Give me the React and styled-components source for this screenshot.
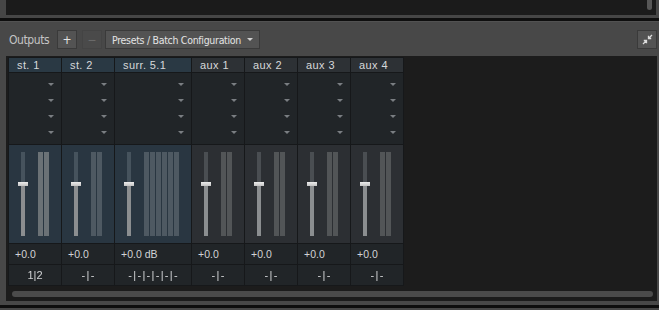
import React from 'react';
import styled, { createGlobalStyle } from 'styled-components';

const GlobalStyle = createGlobalStyle`
  html, body {
    margin: 0;
    padding: 0;
    background: #0e0e0e;
    font-family: "Liberation Sans", Arial, sans-serif;
    -webkit-font-smoothing: antialiased;
  }
`;

const Page = styled.div`
  width: 659px;
  height: 310px;
  overflow: hidden;
  display: flex;
  flex-direction: column;
`;

// top panel (cut off)
const TopFrame = styled.div`
  height: 18px;
  background: #464646;
  padding: 0 3px 3px 6px;
  box-sizing: border-box;
  flex: none;
`;

const TopInner = styled.div`
  height: 100%;
  background: #1b1b1b;
  display: flex;
  justify-content: flex-end;
  padding-right: 4px;
`;

const Thumb = styled.div`
  width: 5px;
  height: 10px;
  background: #575757;
  border-radius: 0 0 3px 3px;
`;

const MainPanel = styled.div`
  margin-top: 3px;
  height: 284px;
  flex: none;
  background: #484848;
  border-top: 1px solid #525252;
  box-sizing: border-box;
  display: flex;
  flex-direction: column;
  padding: 8px 2px 4px 6px;
`;

const Toolbar = styled.div`
  height: 19px;
  display: flex;
  align-items: center;
`;

const Title = styled.div`
  width: 51px;
  flex: none;
  padding-left: 3px;
  box-sizing: border-box;
  font-family: "DejaVu Sans Condensed", "Liberation Sans", sans-serif;
  font-size: 12px;
  letter-spacing: -0.4px;
  color: #c4c4c4;
`;

const ToolButton = styled.div`
  height: 19px;
  width: ${p => p.$w || 20}px;
  flex: none;
  box-sizing: border-box;
  border: 1px solid ${p => (p.$dim ? '#444' : '#3a3a3a')};
  background: ${p => (p.$dim ? '#4a4a4a' : '#535353')};
  color: ${p => (p.$dim ? '#6a6a6a' : '#e4e4e4')};
  display: flex;
  align-items: center;
  justify-content: center;
  margin-right: ${p => p.$mr || 0}px;
  font-family: "DejaVu Sans Condensed", "Liberation Sans", sans-serif;
  font-size: ${p => (p.$wide ? '10.5px' : '12px')};
  letter-spacing: ${p => (p.$wide ? '-0.3px' : '0')};
  white-space: nowrap;
  gap: 6px;
`;

const Spacer = styled.div`
  flex: 1;
`;

const Caret = styled.span`
  width: 0;
  height: 0;
  border-left: 3px solid transparent;
  border-right: 3px solid transparent;
  border-top: 3px solid ${p => p.$c || '#cfcfcf'};
`;

const Content = styled.div`
  margin-top: 7px;
  flex: 1;
  background: #1c1c1c;
  padding: 1px 0 0 2px;
  display: flex;
  flex-direction: column;
  align-items: flex-start;
`;

const Table = styled.div`
  display: grid;
  grid-auto-flow: column;
  grid-template-rows: 14px 71px 98px 20px 20px;
  grid-template-columns: ${p => p.$cols};
  gap: 1px;
  padding: 1px;
  background: #16181a;
`;

const HeadCell = styled.div`
  background: ${p => (p.$aux ? '#2d3135' : '#2a3944')};
  color: #d6d8da;
  font-size: 11px;
  line-height: 14px;
  padding-left: 8px;
  letter-spacing: 0.4px;
  white-space: nowrap;
`;

const SelectCell = styled.div`
  background: #212528;
  padding-top: 3px;
  display: flex;
  flex-direction: column;
`;

const SelectRow = styled.div`
  height: 16px;
  display: flex;
  align-items: center;
  justify-content: flex-end;
  padding-right: 7px;
`;

const FaderCell = styled.div`
  background: ${p => (p.$aux ? '#2c2f33' : '#293641')};
  display: flex;
  align-items: flex-start;
  padding: 7px 0 0 12px;
`;

const Track = styled.div`
  width: 4px;
  height: 84px;
  display: flex;
  flex-direction: column;
  align-items: center;
  margin-right: 13px;
`;

const TrackTop = styled.div`
  width: 4px;
  height: 30px;
  background: ${p => (p.$aux ? '#4a4e52' : '#46535d')};
`;

const Knob = styled.div`
  width: 10px;
  height: 4px;
  flex: none;
  background: linear-gradient(#ececec, #c4c4c4);
`;

const TrackBottom = styled.div`
  width: 4px;
  flex: 1;
  background: #8b8e90;
`;

const Meters = styled.div`
  display: flex;
  gap: 1px;
`;

const Meter = styled.div`
  width: 5px;
  height: 84px;
  background: ${p => p.$c};
`;

const ValueCell = styled.div`
  background: #212528;
  color: #d2d4d6;
  font-size: 10.5px;
  line-height: 20px;
  padding-left: 6px;
  white-space: nowrap;
`;

const RouteCell = styled(ValueCell)`
  padding-left: ${p => (p.$tight ? 0 : 1.3)}px;
  font-size: 11px;
  text-align: center;
  letter-spacing: ${p => (p.$tight ? 0 : 1.3)}px;
  will-change: transform;
`;

const ScrollBar = styled.div`
  align-self: stretch;
  margin: 5px 4px 0 4px;
  height: 6px;
  border-radius: 3px;
  background: #4b4b4b;
`;

const BottomPanel = styled.div`
  margin-top: 3px;
  flex: 1;
  background: #474747;
`;

const channels = [
  { name: 'st. 1', w: 52, meters: 2, color: '#6b7276', value: '+0.0', route: '1|2' },
  { name: 'st. 2', w: 52, meters: 2, color: '#4e5962', value: '+0.0', route: '-|-' },
  { name: 'surr. 5.1', w: 76, meters: 6, color: '#4e5962', value: '+0.0 dB', route: '-|-|-|-|-|-' },
  { name: 'aux 1', w: 52, aux: true, meters: 2, color: '#525557', value: '+0.0', route: '-|-' },
  { name: 'aux 2', w: 52, aux: true, meters: 2, color: '#525557', value: '+0.0', route: '-|-' },
  { name: 'aux 3', w: 52, aux: true, meters: 2, color: '#525557', value: '+0.0', route: '-|-' },
  { name: 'aux 4', w: 52, aux: true, meters: 2, color: '#525557', value: '+0.0', route: '-|-' },
];

const CollapseIcon = () => (
  <svg width="11" height="11" viewBox="0 0 11 11" fill="none" stroke="#dcdcdc" strokeWidth="1.3">
    <path d="M10 1 L6.5 4.5 M6.5 1.8 V4.5 H9.2" />
    <path d="M1 10 L4.5 6.5 M4.5 9.2 V6.5 H1.8" />
  </svg>
);

const App = () => {
  return (
    <Page>
      <GlobalStyle />
      <TopFrame>
        <TopInner>
          <Thumb />
        </TopInner>
      </TopFrame>

      <MainPanel>
        <Toolbar>
          <Title>Outputs</Title>
          <ToolButton $mr={5}>+</ToolButton>
          <ToolButton $dim $mr={3}>−</ToolButton>
          <ToolButton $wide $w={155}>
            Presets / Batch Configuration
            <Caret $c="#d0d0d0" />
          </ToolButton>
          <Spacer />
          <ToolButton>
            <CollapseIcon />
          </ToolButton>
        </Toolbar>

        <Content>
          <Table $cols={channels.map(c => c.w + 'px').join(' ')}>
            {channels.map(ch => (
              <React.Fragment key={ch.name}>
                <HeadCell $aux={ch.aux}>{ch.name}</HeadCell>
                <SelectCell>
                  {[0, 1, 2, 3].map(i => (
                    <SelectRow key={i}>
                      <Caret $c="#7a7e82" />
                    </SelectRow>
                  ))}
                </SelectCell>
                <FaderCell $aux={ch.aux}>
                  <Track>
                    <TrackTop $aux={ch.aux} />
                    <Knob />
                    <TrackBottom />
                  </Track>
                  <Meters>
                    {Array.from({ length: ch.meters }).map((_, i) => (
                      <Meter key={i} $c={ch.color} />
                    ))}
                  </Meters>
                </FaderCell>
                <ValueCell>{ch.value}</ValueCell>
                <RouteCell $tight={ch.route === '1|2'}>{ch.route}</RouteCell>
              </React.Fragment>
            ))}
          </Table>
          <ScrollBar />
        </Content>
      </MainPanel>
      <BottomPanel />
    </Page>
  );
};

export default App;
